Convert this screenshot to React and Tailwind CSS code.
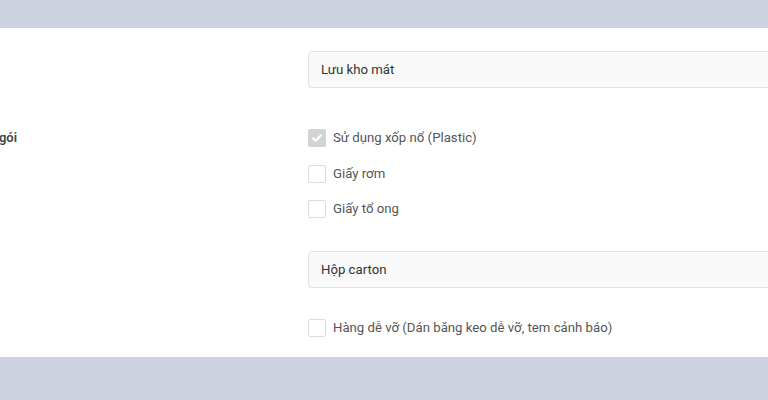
import React from 'react';

const Checkbox = ({ checked, label }) => (
  <label className="flex items-center gap-[7px] h-[18px]">
    {checked ? (
      <span className="w-[18px] h-[18px] rounded-[2px] bg-[#d3d3d3] flex items-center justify-center shrink-0">
        <svg width="12" height="12" viewBox="0 0 12 12" fill="none">
          <path d="M2 6.3l2.6 2.6L10 3.2" stroke="#fff" strokeWidth="2" strokeLinecap="round" strokeLinejoin="round" />
        </svg>
      </span>
    ) : (
      <span className="w-[18px] h-[18px] rounded-[2px] border border-[#dcdcdc] bg-white shrink-0" />
    )}
    <span className="text-[13.2px] text-[#555] whitespace-nowrap">{label}</span>
  </label>
);

const Field = ({ value }) => (
  <div className="h-[37px] w-[500px] shrink-0 rounded-[4px] border border-[#e2e2e2] bg-[#f9f9f9] flex items-center px-3 text-[13.2px] text-[#333]">
    {value}
  </div>
);

export default function App() {
  return (
    <div className="w-[768px] h-[400px] overflow-hidden bg-[#cdd3e0] flex flex-col" style={{ fontFamily: 'Roboto, "Liberation Sans", sans-serif' }}>
      <div className="h-[28px] shrink-0" />
      <div className="h-[329px] bg-white shrink-0 overflow-hidden flex flex-col pt-[23px]">
        {/* storage */}
        <div className="flex">
          <div className="w-[308px] shrink-0" />
          <Field value="Lưu kho mát" />
        </div>

        {/* packing material */}
        <div className="flex mt-[41px]">
          <div className="w-[308px] shrink-0 h-[18px] flex items-center">
            <span className="-ml-[35px] text-[13px] font-semibold text-[#444] whitespace-nowrap">Đóng gói</span>
          </div>
          <div className="flex flex-col gap-[17.5px]">
            <Checkbox checked label="Sử dụng xốp nổ (Plastic)" />
            <Checkbox label="Giấy rơm" />
            <Checkbox label="Giấy tổ ong" />
          </div>
        </div>

        {/* outer box */}
        <div className="flex mt-[33px]">
          <div className="w-[308px] shrink-0" />
          <Field value="Hộp carton" />
        </div>

        {/* fragile */}
        <div className="flex mt-[31px]">
          <div className="w-[308px] shrink-0" />
          <Checkbox label="Hàng dễ vỡ (Dán băng keo dễ vỡ, tem cảnh báo)" />
        </div>
      </div>
      <div className="flex-1" />
    </div>
  );
}
